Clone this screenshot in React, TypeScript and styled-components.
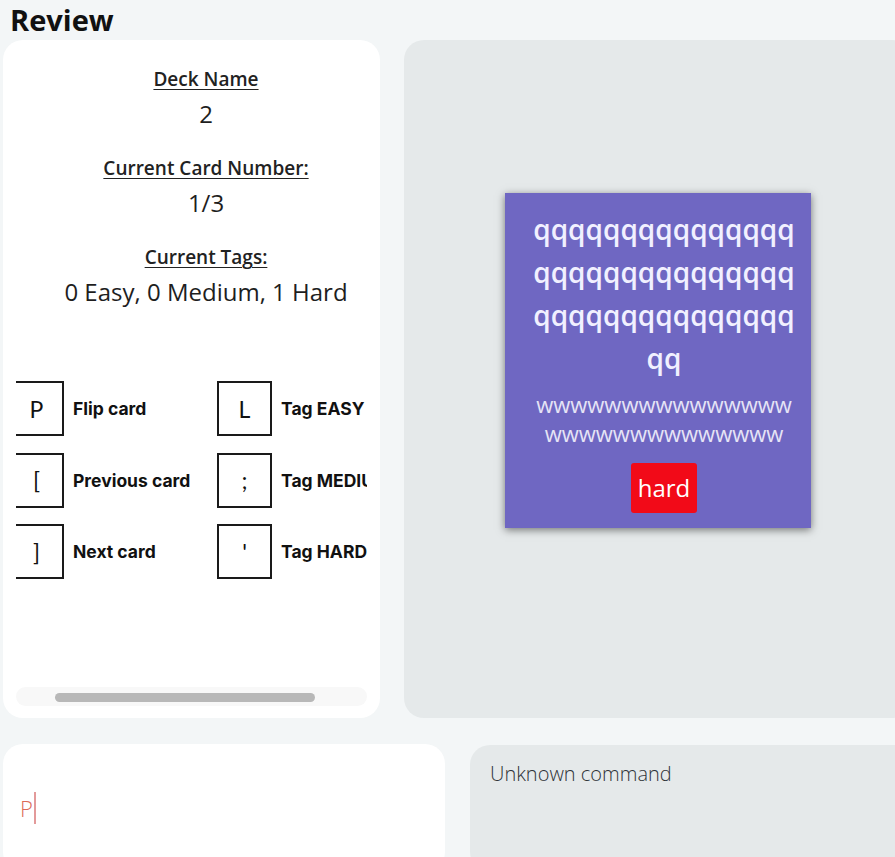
import React, { useLayoutEffect, useRef } from "react";
import styled, { createGlobalStyle } from "styled-components";

const GlobalStyle = createGlobalStyle`
  html, body {
    margin: 0;
    padding: 0;
    overflow: hidden;
    background: #f3f6f7;
  }
  body {
    font-family: "Open Sans", "Noto Sans", sans-serif;
    color: #1b1b1b;
  }
`;

const Page = styled.div`
  display: flex;
  flex-direction: column;
  padding-left: 3px;
  width: 920px;
`;

const Title = styled.h1`
  margin: 0;
  padding-left: 7px;
  height: 40px;
  font-size: 29px;
  line-height: 40px;
  font-weight: 700;
  color: #111;
`;

const TopRow = styled.div`
  display: flex;
  gap: 24px;
  height: 678px;
`;

const LeftPanel = styled.section`
  flex: none;
  width: 377px;
  box-sizing: border-box;
  background: #ffffff;
  border-radius: 20px;
  padding: 13px 13px 12px;
  display: flex;
  flex-direction: column;
`;

const Scroller = styled.div`
  flex: 1;
  overflow: hidden;
`;

const ScrollTrack = styled.div`
  flex: none;
  height: 19px;
  box-sizing: border-box;
  padding: 6px 0 4px 39px;
  background: #f8f8f8;
  border-radius: 10px;
`;

const ScrollThumb = styled.div`
  width: 260px;
  height: 9px;
  background: #b8b8b8;
  border-radius: 5px;
`;

const ScrollContent = styled.div`
  width: 480px;
  padding-top: 13px;
  display: flex;
  flex-direction: column;
  gap: 73px;
`;

const InfoList = styled.div`
  display: flex;
  flex-direction: column;
  gap: 25px;
  text-align: center;
`;

const InfoSection = styled.div`
  display: flex;
  flex-direction: column;
  gap: 6px;
`;

const InfoLabel = styled.div`
  font-size: 19px;
  line-height: 26px;
  font-weight: 600;
  text-decoration: underline;
  text-underline-offset: 3px;
  text-decoration-thickness: 1px;
  color: #222;
`;

const InfoValue = styled.div`
  font-size: 24px;
  line-height: 32px;
  font-weight: 500;
  color: #1e1e1e;
`;

const KeyGrid = styled.div`
  display: grid;
  grid-template-columns: 180px auto;
  column-gap: 28px;
  row-gap: 16.5px;
  padding-left: 43px;
`;

const KeyItem = styled.div`
  display: flex;
  align-items: center;
  gap: 9px;
  white-space: nowrap;
`;

const KeyBox = styled.div`
  flex: none;
  width: 55px;
  height: 55px;
  box-sizing: border-box;
  border: 2px solid #1a1a1a;
  display: flex;
  align-items: center;
  justify-content: center;
  font-family: "Lato", sans-serif;
  font-weight: 400;
  font-size: 23px;
  color: #111;
`;

const KeyLabel = styled.span`
  font-family: "Inter", sans-serif;
  font-weight: 700;
  font-size: 17.5px;
  color: #111;
`;

const RightPanel = styled.section`
  flex: none;
  width: 508px;
  box-sizing: border-box;
  background: #e5e9ea;
  border-radius: 20px;
  display: flex;
  align-items: center;
  justify-content: center;
  padding-bottom: 38px;
`;

const Card = styled.div`
  width: 306px;
  box-sizing: border-box;
  background: #6f67c2;
  box-shadow: 0 2px 8px rgba(0, 0, 0, 0.5);
  padding: 15px 12px 15px 24px;
  display: flex;
  flex-direction: column;
  align-items: center;
  text-align: center;
`;

const Question = styled.div`
  width: 270px;
  font-size: 28px;
  line-height: 43px;
  font-weight: 600;
  color: #f1f0ff;
  word-break: break-all;
`;

const Answer = styled.div`
  width: 262px;
  margin-top: 10px;
  font-size: 22px;
  line-height: 29px;
  font-weight: 400;
  color: #e6e4f6;
  word-break: break-all;
`;

const Tag = styled.span`
  margin-top: 15px;
  background: #f20a18;
  color: #fff;
  border-radius: 3px;
  height: 50px;
  padding: 0 7px;
  display: flex;
  align-items: center;
  font-size: 24px;
  font-weight: 400;
`;

const BottomRow = styled.div`
  display: flex;
  align-items: flex-start;
  gap: 25px;
  margin-top: 26px;
  height: 128px;
`;

const InputPanel = styled.div`
  flex: none;
  width: 442px;
  height: 128px;
  box-sizing: border-box;
  background: #ffffff;
  border-radius: 20px;
  padding-left: 17px;
  display: flex;
  align-items: center;
`;

const Typed = styled.span`
  font-family: "Open Sans", sans-serif;
  font-weight: 300;
  font-size: 22px;
  color: #dc6a58;
  padding-right: 1px;
  line-height: 32px;
  border-right: 2px solid #e39a9a;
`;

const OutputPanel = styled.div`
  flex: none;
  width: 460px;
  height: 127px;
  margin-top: 1px;
  box-sizing: border-box;
  background: #e5e9ea;
  border-radius: 20px;
  padding: 15px 20px;
  font-weight: 300;
  font-size: 20px;
  line-height: 28px;
  color: #2f3338;
`;

const info = [
  { label: "Deck Name", value: "2" },
  { label: "Current Card Number:", value: "1/3" },
  { label: "Current Tags:", value: "0 Easy, 0 Medium, 1 Hard" },
];

const keys = [
  { key: "P", label: "Flip card" },
  { key: "L", label: "Tag EASY" },
  { key: "[", label: "Previous card" },
  { key: ";", label: "Tag MEDIUM" },
  { key: "]", label: "Next card" },
  { key: "'", label: "Tag HARD" },
];

export default function App() {
  const scrollRef = useRef<HTMLDivElement>(null);
  useLayoutEffect(() => {
    if (scrollRef.current) scrollRef.current.scrollLeft = 50;
  }, []);

  return (
    <>
      <GlobalStyle />
      <Page>
        <Title>Review</Title>
        <TopRow>
          <LeftPanel>
            <Scroller ref={scrollRef}>
              <ScrollContent>
                <InfoList>
                  {info.map((i) => (
                    <InfoSection key={i.label}>
                      <InfoLabel>{i.label}</InfoLabel>
                      <InfoValue>{i.value}</InfoValue>
                    </InfoSection>
                  ))}
                </InfoList>
                <KeyGrid>
                  {keys.map((k) => (
                    <KeyItem key={k.label}>
                      <KeyBox>{k.key}</KeyBox>
                      <KeyLabel>{k.label}</KeyLabel>
                    </KeyItem>
                  ))}
                </KeyGrid>
              </ScrollContent>
            </Scroller>
            <ScrollTrack>
              <ScrollThumb />
            </ScrollTrack>
          </LeftPanel>
          <RightPanel>
            <Card>
              <Question>qqqqqqqqqqqqqqqqqqqqqqqqqqqqqqqqqqqqqqqqqqqqqqq</Question>
              <Answer>wwwwwwwwwwwwwwwwwwwwwwwwwwwww</Answer>
              <Tag>hard</Tag>
            </Card>
          </RightPanel>
        </TopRow>
        <BottomRow>
          <InputPanel>
            <Typed>P</Typed>
          </InputPanel>
          <OutputPanel>Unknown command</OutputPanel>
        </BottomRow>
      </Page>
    </>
  );
}
